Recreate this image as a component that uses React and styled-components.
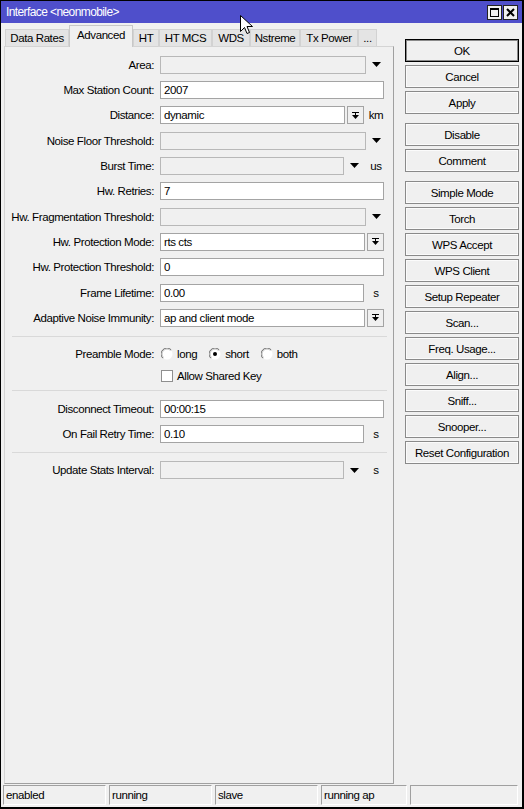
import React from "react";
import styled, { createGlobalStyle, css } from "styled-components";

const GlobalStyle = createGlobalStyle`
  html, body {
    margin: 0;
    padding: 0;
    background: #f0f0f0;
  }
  body {
    font-family: "Liberation Sans", Arial, sans-serif;
    font-size: 11.5px;
    letter-spacing: -0.4px;
    color: #000;
  }
  * { box-sizing: border-box; }
`;

const Window = styled.div`
  position: relative;
  width: 524px;
  height: 809px;
  display: flex;
  flex-direction: column;
  border: 1px solid #000;
  border-right-width: 2px;
  border-bottom-width: 2px;
  background: #f0f0f0;
  overflow: hidden;
`;

const TitleBar = styled.div`
  height: 22px;
  flex: none;
  display: flex;
  align-items: center;
  padding: 0 4px 0 5px;
  background: #4f4fcb;
  color: #fff;
  font-size: 12px;
  letter-spacing: -0.6px;
`;

const Title = styled.span`
  flex: 1;
`;

const TitleButton = styled.div`
  width: 15px;
  height: 15px;
  margin-left: 1px;
  display: flex;
  align-items: center;
  justify-content: center;
  background: #f0f0f0;
  border: 1px solid #222;
`;

const Body = styled.div`
  flex: 1;
  display: flex;
  flex-direction: column;
  padding: 2px 0 2px 0;
  min-height: 0;
`;

const Main = styled.div`
  flex: 1;
  display: flex;
  min-height: 0;
`;

const LeftColumn = styled.div`
  width: 390px;
  margin-left: 3px;
  display: flex;
  flex-direction: column;
`;

const TabBar = styled.div`
  height: 21px;
  display: flex;
  align-items: flex-end;
  padding-left: 1px;
`;

const Tab = styled.div`
  width: ${({ $w }) => $w}px;
  height: 17px;
  display: flex;
  align-items: center;
  justify-content: center;
  white-space: nowrap;
  border: 1px solid #d2d2d2;
  border-bottom: none;
  background: #e4e4e4;
  ${({ $active }) =>
    $active &&
    css`
      position: relative;
      z-index: 1;
      height: 22px;
      margin-bottom: -1px;
      padding-bottom: 4px;
      background: #f0f0f0;
      border-color: #c8c8c8;
    `}
`;

const Panel = styled.div`
  flex: 1;
  border: 1px solid #a0a0a0;
  border-top-color: #d4d4d4;
  border-left-color: #d4d4d4;
  padding-top: 5px;
`;

const Row = styled.div`
  height: ${({ $h }) => $h || 25.33}px;
  display: flex;
  align-items: ${({ $top }) => ($top ? "flex-start" : "center")};
  padding-top: ${({ $top }) => ($top ? "3px" : "0")};
`;

const Label = styled.div`
  width: 149px;
  text-align: right;
  white-space: nowrap;
  margin-right: 6px;
`;

const Control = styled.div`
  width: 226px;
  display: flex;
  align-items: center;
  padding-right: ${({ $pad }) => ($pad ? "2px" : "0")};
`;

const Field = styled.div`
  flex: 1;
  height: 18px;
  padding: 0 3px;
  display: flex;
  align-items: center;
  white-space: nowrap;
  overflow: hidden;
  background: ${({ $disabled }) => ($disabled ? "#f0f0f0" : "#fff")};
  border: 1px solid ${({ $disabled }) => ($disabled ? "#b8b8b8" : "#a4a4a4")};
`;

const ArrowSlot = styled.div`
  width: 20px;
  display: flex;
  justify-content: center;
`;

const DropButton = styled.div`
  width: 17px;
  height: 18px;
  margin-left: 2px;
  display: flex;
  align-items: center;
  justify-content: center;
  background: #f0f0f0;
  border: 1px solid #a4a4a4;
`;

const Unit = styled.div`
  width: 20px;
  margin-left: 2px;
  text-align: center;
`;

const Separator = styled.div`
  height: 1px;
  margin: 5px 6px 5px 7px;
  background: #d9d9d9;
`;

const Options = styled.div`
  display: flex;
  align-items: center;
  gap: 12px;
  padding-left: 1px;
`;

const Option = styled.label`
  display: flex;
  align-items: center;
  gap: 4px;
`;

const CheckBox = styled.span`
  width: 12px;
  height: 12px;
  margin-left: 1px;
  margin-right: 4px;
  background: #fff;
  border: 1px solid #8f8f8f;
`;

const Side = styled.div`
  width: 114px;
  margin-left: 11px;
  padding-top: 14px;
  display: flex;
  flex-direction: column;
`;

const Group = styled.div`
  display: flex;
  flex-direction: column;
  gap: 3px;
  margin-bottom: 9px;
`;

const SideButton = styled.div`
  height: 23px;
  display: flex;
  align-items: center;
  justify-content: center;
  background: #f0f0f0;
  border: 1px solid ${({ $default }) => ($default ? "#000" : "#8a8a8a")};
  box-shadow: inset 0 0 0 1px ${({ $default }) => ($default ? "#8a8a8a" : "#fbfbfb")};
`;

const StatusBar = styled.div`
  height: 20px;
  margin-top: 1px;
  padding-left: 2px;
  display: flex;
  gap: 3px;
`;

const StatusCell = styled.div`
  width: ${({ $w }) => $w}px;
  display: flex;
  align-items: center;
  padding-left: 2px;
  border: 1px solid #fff;
  border-top-color: #a0a0a0;
  border-left-color: #a0a0a0;
`;

const Cursor = styled.svg`
  position: absolute;
  left: 239px;
  top: 14px;
  z-index: 5;
`;

function DownArrow() {
  return (
    <svg width="9" height="5" viewBox="0 0 9 5">
      <polygon points="0,0 9,0 4.5,5" fill="#000" />
    </svg>
  );
}

function DropIcon() {
  return (
    <svg width="7" height="7" viewBox="0 0 7 7">
      <rect x="0" y="0" width="7" height="1" fill="#000" />
      <rect x="3" y="1" width="1" height="2" fill="#000" />
      <polygon points="0,3 7,3 3.5,7" fill="#000" />
    </svg>
  );
}

function Radio({ checked }) {
  return (
    <svg width="12" height="12" viewBox="0 0 12 12">
      <circle cx="6" cy="6" r="5.5" fill="#fff" />
      <path d="M1.8 10.2 A5.5 5.5 0 0 1 10.2 1.8" fill="none" stroke="#6a6a6a" strokeWidth="1" />
      <path d="M2.5 9.5 A4.5 4.5 0 0 1 9.5 2.5" fill="none" stroke="#c4c4c4" strokeWidth="1" />
      {checked && <circle cx="6" cy="6" r="2" fill="#000" />}
    </svg>
  );
}

const tabs = [
  { name: "Data Rates", w: 64 },
  { name: "Advanced", w: 64, active: true },
  { name: "HT", w: 26 },
  { name: "HT MCS", w: 53 },
  { name: "WDS", w: 38 },
  { name: "Nstreme", w: 50 },
  { name: "Tx Power", w: 58 },
  { name: "...", w: 19 },
];

const fields = [
  { label: "Area", disabled: true, arrow: true },
  { label: "Max Station Count", value: "2007" },
  { label: "Distance", value: "dynamic", button: true, unit: "km" },
  { label: "Noise Floor Threshold", disabled: true, arrow: true },
  { label: "Burst Time", disabled: true, arrow: true, unit: "us" },
  { label: "Hw. Retries", value: "7" },
  { label: "Hw. Fragmentation Threshold", disabled: true, arrow: true },
  { label: "Hw. Protection Mode", value: "rts cts", button: true },
  { label: "Hw. Protection Threshold", value: "0" },
  { label: "Frame Lifetime", value: "0.00", unit: "s" },
  { label: "Adaptive Noise Immunity", value: "ap and client mode", button: true },
];

const timeouts = [
  { label: "Disconnect Timeout", value: "00:00:15" },
  { label: "On Fail Retry Time", value: "0.10", unit: "s" },
];

const buttonGroups = [
  ["OK", "Cancel", "Apply"],
  ["Disable", "Comment"],
  [
    "Simple Mode",
    "Torch",
    "WPS Accept",
    "WPS Client",
    "Setup Repeater",
    "Scan...",
    "Freq. Usage...",
    "Align...",
    "Sniff...",
    "Snooper...",
    "Reset Configuration",
  ],
];

const status = [
  { text: "enabled", w: 103 },
  { text: "running", w: 103 },
  { text: "slave", w: 103 },
  { text: "running ap", w: 86 },
  { text: "", w: 108 },
];

function FieldRow({ label, value, disabled, arrow, button, unit }) {
  return (
    <Row>
      <Label>{label}:</Label>
      <Control $pad={!arrow && !unit}>
        <Field $disabled={disabled}>{value}</Field>
        {button && (
          <DropButton>
            <DropIcon />
          </DropButton>
        )}
        {arrow && (
          <ArrowSlot>
            <DownArrow />
          </ArrowSlot>
        )}
        {unit && <Unit>{unit}</Unit>}
      </Control>
    </Row>
  );
}

export default function App() {
  return (
    <>
      <GlobalStyle />
      <Window>
        <TitleBar>
          <Title>Interface &lt;neonmobile&gt;</Title>
          <TitleButton>
            <svg width="9" height="9" viewBox="0 0 9 9">
              <rect x="0.5" y="0.5" width="8" height="8" fill="none" stroke="#000" />
              <rect x="0" y="0" width="9" height="2" fill="#000" />
            </svg>
          </TitleButton>
          <TitleButton>
            <svg width="9" height="9" viewBox="0 0 9 9">
              <path d="M1 1 L8 8 M8 1 L1 8" stroke="#000" strokeWidth="2" />
            </svg>
          </TitleButton>
        </TitleBar>

        <Cursor width="13" height="20" viewBox="0 0 13 20">
          <path
            d="M0.5 0.5 L0.5 16.5 L4.5 12.5 L7 18.5 L9.5 17.5 L7 11.5 L12.5 11.5 Z"
            fill="#fff"
            stroke="#000"
            strokeWidth="1"
          />
        </Cursor>

        <Body>
          <Main>
            <LeftColumn>
              <TabBar>
                {tabs.map((t) => (
                  <Tab key={t.name} $w={t.w} $active={t.active}>
                    {t.name}
                  </Tab>
                ))}
              </TabBar>
              <Panel>
                {fields.map((f) => (
                  <FieldRow key={f.label} {...f} />
                ))}
                <Separator />
                <Row>
                  <Label>Preamble Mode:</Label>
                  <Options>
                    <Option>
                      <Radio /> long
                    </Option>
                    <Option>
                      <Radio checked /> short
                    </Option>
                    <Option>
                      <Radio /> both
                    </Option>
                  </Options>
                </Row>
                <Row $h={18} $top>
                  <Label />
                  <CheckBox />
                  Allow Shared Key
                </Row>
                <Separator />
                {timeouts.map((f) => (
                  <FieldRow key={f.label} {...f} />
                ))}
                <Separator />
                <FieldRow label="Update Stats Interval" disabled arrow unit="s" />
              </Panel>
            </LeftColumn>

            <Side>
              {buttonGroups.map((g, i) => (
                <Group key={i}>
                  {g.map((b) => (
                    <SideButton key={b} $default={b === "OK"}>
                      {b}
                    </SideButton>
                  ))}
                </Group>
              ))}
            </Side>
          </Main>

          <StatusBar>
            {status.map((s, i) => (
              <StatusCell key={i} $w={s.w}>
                {s.text}
              </StatusCell>
            ))}
          </StatusBar>
        </Body>
      </Window>
    </>
  );
}
